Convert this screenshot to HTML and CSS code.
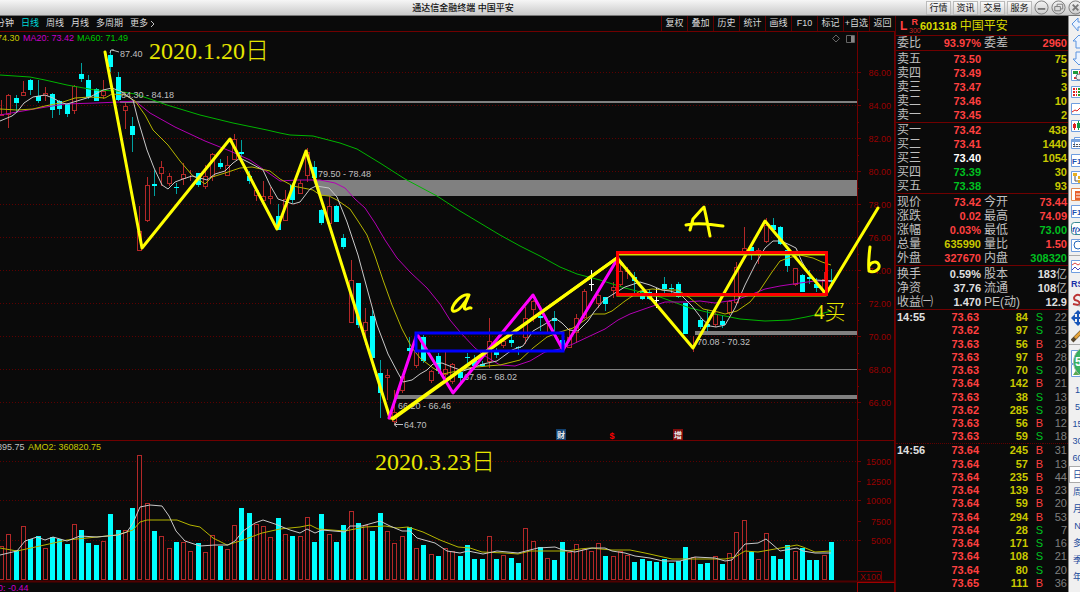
FILE: index.html
```html
<!DOCTYPE html>
<html lang="zh-CN">
<head>
<meta charset="utf-8">
<title>通达信金融终端 中国平安</title>
<link rel="stylesheet" href="styles.css">
</head>
<body>
<header class="titlebar">
  <h1 class="title">通达信金融终端 中国平安</h1>
  <div class="title-actions">
    <button class="tbtn">行情</button><button class="tbtn">资讯</button><button class="tbtn">交易</button><button class="tbtn">服务</button>
    <button class="round" aria-label="最小化"><svg viewBox="0 0 16 16"><circle cx="8" cy="8" r="7"/><path d="M4 9.500h8" stroke-width="2"/></svg></button>
    <button class="round" aria-label="还原"><svg viewBox="0 0 16 16"><circle cx="8" cy="8" r="7"/><path d="M6.500 6.500v-2h6v5h-2M4 7h6v4.500H4z"/></svg></button>
    <button class="round" aria-label="关闭"><svg viewBox="0 0 16 16"><circle cx="8" cy="8" r="7"/><path d="M5 5l6 6M11 5l-6 6" stroke-width="2"/></svg></button>
  </div>
</header>
<div class="workspace">
  <main class="chart-col">
    <nav class="toolbar">
      <div class="periods">
        <button>分钟</button><button class="on">日线</button><button>周线</button><button>月线</button><button>多周期</button><button>更多<svg class="chev" viewBox="0 0 5 8"><path d="M1 1l3 3-3 3"/></svg></button>
      </div>
      <div class="tools">
        <button>复权</button><button>叠加</button><button>历史</button><button>统计</button><button>画线</button><button>F10</button><button>标记</button><button>+自选</button><button>返回</button>
      </div>
    </nav>
    <svg class="chart" viewBox="0 31 895 561" role="img" aria-label="日线图">
      <g id="grid"></g>
      <g class="frame">
        <path d="M857.500 31V592M894.500 31V592M0 440.500H894"/>
        <path d="M0 581.500H894" class="heavy"/>
        <path d="M857.500 571.500H881.500V581"/>
        <path d="M857.500 582.500H894.500M857.500 582V592" class="bright"/>
      </g>
      <g class="bands">
        <path d="M120 101H857V103H120z"/><path d="M313 180H857V196H319z"/><path d="M397 395H857V399H395z"/><path d="M460 369H857V370H460z"/><path d="M695 331H857V335H695z"/>
      </g>
      <g id="candles"></g>
      <g class="ma">
        <polyline class="green" points="0,75 30,77 45,80 67,85 95,90 117,91 135,94 150,99 167,105 200,115 233,123 267,130 280,133 290,135 313,136 340,143 357,149 380,163 405,179 437,196 460,211 500,235 520,246 540,256 560,267 577,274 600,280 625,288 660,297 690,308 715,314 740,319 765,321 790,320 806,317 824,313 831,311"/>
        <polyline class="magenta" points="0,115 17,112 40,108 65,104 95,103 120,102 135,101 150,113 175,127 205,141 230,151 250,160 270,174 280,181 297,180 320,180 335,183 345,188 355,199 365,208 375,223 385,240 397,258 410,272 427,288 440,304 450,320 460,332 475,348 485,356 500,365 515,366 530,361 545,352 560,349 573,344 590,336 605,329 618,320 630,314 650,307 665,302 685,302 700,301 715,303 735,300 750,295 765,289 780,286 800,283 815,281 831,281"/>
        <polyline class="yellow" points="0,109 17,110 33,109 45,106 60,103 75,98 90,97 105,98 112,94 125,95 135,101 145,115 153,130 168,145 180,161 192,175 205,184 212,177 225,173 240,168 252,167 270,171 280,179 293,186 313,190 320,195 329,196 337,200 350,209 358,221 367,235 375,256 383,280 392,305 402,329 412,348 420,358 433,368 443,374 457,371 467,368 487,366 500,365 520,360 533,348 547,337 560,332 573,328 585,320 593,314 605,314 612,311 625,301 640,291 652,289 665,290 678,290 690,298 703,309 718,312 725,314 737,311 750,302 760,290 772,272 780,261 788,258 800,255 813,258 822,262 831,265"/>
        <polyline class="white" points="0,121 12,116 17,112 24,103 33,97 45,95 53,98 62,103 67,104 77,101 90,97 103,90 112,88 122,92 133,100 138,120 147,150 154,168 162,185 168,189 175,182 183,179 192,176 200,178 207,180 215,174 225,171 233,163 240,158 248,162 263,170 270,185 278,199 293,204 300,202 310,189 316,186 329,188 337,197 347,222 358,255 368,292 377,325 388,354 398,373 403,382 412,380 420,374 427,370 433,364 442,363 452,367 463,371 472,368 483,364 497,361 512,350 523,346 533,331 545,324 555,318 562,323 569,330 578,331 588,321 594,312 604,300 615,293 625,287 640,282 650,285 662,290 670,291 680,294 692,306 702,319 710,326 716,327 725,325 735,308 745,285 755,265 765,248 773,241 781,241 790,245 796,248 802,262 810,275 816,280 831,281"/>
        <polyline class="yellow" points="0,548 17,551 40,546 67,540 97,537 117,535 133,530 140,522 147,520 177,520 190,525 200,527 213,538 227,545 240,541 262,533 280,529 300,527 310,525 318,529 345,531 365,527 385,526 397,528 408,527 423,532 440,540 458,547 470,548 482,552 505,553 518,554 530,551 567,551 580,549 590,548 612,550 630,550 645,553 672,559 725,559 735,557 745,551 758,552 775,549 797,545 803,547 815,552 831,551"/>
        <polyline class="white" points="0,555 17,551 25,541 37,537 45,540 53,537 67,541 80,536 97,537 118,535 127,532 133,523 140,507 150,505 162,506 169,516 176,531 185,541 200,546 215,545 228,545 235,541 243,531 255,523 263,520 275,524 290,530 300,533 307,529 315,533 322,530 345,532 350,526 362,526 380,521 390,526 402,531 410,531 417,538 435,543 447,551 460,553 468,551 483,554 497,551 518,553 530,550 538,548 555,547 563,550 575,552 592,548 605,548 612,551 625,553 635,556 650,558 663,561 680,561 695,557 715,558 725,561 732,560 738,552 745,544 758,543 766,539 772,544 780,551 797,548 803,551 815,553 831,553"/>
      </g>
      <g class="small">
        <text x="-3" y="41" class="t-yellow">74.30</text><text x="23" y="41" class="t-magenta">MA20: 73.42</text><text x="77" y="41" class="t-green">MA60: 71.49</text>
        <text x="-3" y="450">895.75</text><text x="28" y="450" class="t-yellow">AMO2: 360820.75</text>
        <text x="-2" y="591" class="t-magenta">0: -0.44</text>
        <text x="120" y="57">87.40</text><text x="121" y="98">84.30 - 84.18</text><text x="318" y="177">79.50 - 78.48</text><text x="464" y="380">67.96 - 68.02</text><text x="398" y="409">66.20 - 66.46</text><text x="404" y="428">64.70</text><text x="697" y="345">70.08 - 70.32</text>
        <path class="pointer" d="M119 52l-7-2M110 53l1-3h3M403 424.500h-8M397 422l-3 2.500 3 2.500"/>
        <path class="corner" d="M836 35l3.500 3.500-3.500 3.500-3.500-3.500zM846.500 35.500h8v7h-8z"/><path class="corner-fill" d="M851 36h3v6h-3z"/>
      </g>
      <g class="axis" id="axis"></g>
      <g class="draw">
        <polyline class="wave" points="105,52 142,248 230,139 277,229 306,151 390,418 393,418 617,258 693,348 765,221 826,294 878,208"/>
        <polyline class="leg" points="389,418 417,334 453,393 533,295 563,350 618,258"/>
        <polyline class="wave" points="393,419 617,258 622,264"/>
        <rect class="blue" x="416" y="333" width="147" height="18"/>
        <path class="thin" d="M618 254.500H826M617 295.500H826"/>
        <rect class="red" x="617.500" y="252.500" width="209" height="42"/>
        <path class="hand" d="M469 295C461 293 449 308 453 311C458 313 466 302 469 295C466 302 463 309 465 309C467 310 469 307 471 308M690 230L693 219L702 209L704 207L706 216L710 236M686 225C700 222 713 225 723 226M870 247C869 255 868 263 869 271C874 273 880 270 879 265C877 260 871 262 869 266"/>
        <text x="149" y="59" class="date">2020.1.20日</text>
        <text x="375" y="470" class="date">2020.3.23日</text>
        <text x="814" y="319" class="buy">4买</text>
      </g>
      <g class="marks">
        <rect x="556" y="429" width="10" height="11" fill="#12406e"/><text x="561" y="438">财</text>
        <text x="612" y="439" class="dollar">$</text>
        <rect x="673" y="429" width="10" height="11" fill="#800c0c"/><text x="678" y="438">增</text>
      </g>
    </svg>
  </main>

  <aside class="quote">
    <div class="stock"><b class="l">L</b><span class="r300"><b>R</b><span>300</span></span><b>601318</b><span class="name">中国平安</span></div>
    <table class="pairs one"><tr><th>委比</th><td class="up">93.97%</td><th>委差</th><td class="up">2960</td></tr></table>
    <table class="book sell">
      <tr><th>卖五</th><td class="up">73.50</td><td>75</td></tr>
      <tr><th>卖四</th><td class="up">73.49</td><td>5</td></tr>
      <tr><th>卖三</th><td class="up">73.47</td><td>3</td></tr>
      <tr><th>卖二</th><td class="up">73.46</td><td>10</td></tr>
      <tr><th>卖一</th><td class="up">73.45</td><td>2</td></tr>
    </table>
    <table class="book">
      <tr><th>买一</th><td class="up">73.42</td><td>438</td></tr>
      <tr><th>买二</th><td class="up">73.41</td><td>1440</td></tr>
      <tr><th>买三</th><td class="flat">73.40</td><td>1054</td></tr>
      <tr><th>买四</th><td class="down">73.39</td><td>30</td></tr>
      <tr><th>买五</th><td class="down">73.38</td><td>93</td></tr>
    </table>
    <table class="pairs">
      <tr><th>现价</th><td class="up">73.42</td><th>今开</th><td class="up">73.44</td></tr>
      <tr><th>涨跌</th><td class="up">0.02</td><th>最高</th><td class="up">74.09</td></tr>
      <tr><th>涨幅</th><td class="up">0.03%</td><th>最低</th><td class="down">73.00</td></tr>
      <tr><th>总量</th><td class="vol">635990</td><th>量比</th><td class="up">1.50</td></tr>
      <tr><th>外盘</th><td class="up">327670</td><th>内盘</th><td class="down">308320</td></tr>
    </table>
    <table class="pairs">
      <tr><th>换手</th><td>0.59%</td><th>股本</th><td>183<span class="unit">亿</span></td></tr>
      <tr><th>净资</th><td>37.76</td><th>流通</th><td>108<span class="unit">亿</span></td></tr>
      <tr><th>收益㈠</th><td>1.470</td><th>PE(动)</th><td>12.9</td></tr>
    </table>
    <table class="ticks">
      <tr><th>14:55</th><td>73.63</td><td>84</td><td class="down">S</td><td>22</td></tr>
      <tr><th></th><td>73.62</td><td>97</td><td class="down">S</td><td>25</td></tr>
      <tr><th></th><td>73.63</td><td>56</td><td class="up">B</td><td>23</td></tr>
      <tr><th></th><td>73.63</td><td>97</td><td class="up">B</td><td>28</td></tr>
      <tr><th></th><td>73.63</td><td>70</td><td class="down">S</td><td>20</td></tr>
      <tr><th></th><td>73.64</td><td>142</td><td class="up">B</td><td>21</td></tr>
      <tr><th></th><td>73.63</td><td>38</td><td class="down">S</td><td>13</td></tr>
      <tr><th></th><td>73.62</td><td>285</td><td class="down">S</td><td>28</td></tr>
      <tr><th></th><td>73.63</td><td>56</td><td class="up">B</td><td>12</td></tr>
      <tr><th></th><td>73.63</td><td>59</td><td class="down">S</td><td>18</td></tr>
      <tr class="minute"><th>14:56</th><td>73.64</td><td>245</td><td class="up">B</td><td>31</td></tr>
      <tr><th></th><td>73.64</td><td>57</td><td class="up">B</td><td>13</td></tr>
      <tr><th></th><td>73.64</td><td>235</td><td class="up">B</td><td>44</td></tr>
      <tr><th></th><td>73.64</td><td>139</td><td class="up">B</td><td>23</td></tr>
      <tr><th></th><td>73.64</td><td>59</td><td class="up">B</td><td>20</td></tr>
      <tr><th></th><td>73.64</td><td>294</td><td class="up">B</td><td>53</td></tr>
      <tr><th></th><td>73.64</td><td>28</td><td class="down">S</td><td>7</td></tr>
      <tr><th></th><td>73.64</td><td>171</td><td class="down">S</td><td>16</td></tr>
      <tr><th></th><td>73.64</td><td>108</td><td class="down">S</td><td>21</td></tr>
      <tr><th></th><td>73.64</td><td>80</td><td class="down">S</td><td>20</td></tr>
      <tr><th></th><td>73.65</td><td>111</td><td class="up">B</td><td>36</td></tr>
    </table>
  </aside>

  <nav class="rail" aria-label="工具">
    <button aria-label="后退"><svg viewBox="0 0 18 17"><path class="arrow" d="M1 8l6-6v4h9v5H7v4z"/></svg></button>
    <button aria-label="上"><svg viewBox="0 0 18 17"><path class="arrow" d="M8 2l6 6h-3v7H5V8H2z"/></svg></button>
    <button aria-label="下"><svg viewBox="0 0 18 17"><path class="arrow" d="M8 15l6-6h-3V2H5v7H2z"/></svg></button>
    <button aria-label="报表"><svg viewBox="0 0 18 17"><path class="box" d="M.500 2.500h16v11H.500z"/><path fill="#1d9a3a" d="M2 4h5v3H2z"/><path fill="#d33" d="M8 4h5v3H8zM3 10h4v2H3z"/><circle cx="8" cy="10" r="3" fill="#eee" stroke="#678"/></svg></button>
    <button aria-label="行情表"><svg viewBox="0 0 18 17"><path class="box" d="M.500 2.500h16v11H.500z"/><path stroke="#d22" stroke-width="2" stroke-dasharray="2 1" d="M2 5h4M2 8h4M2 11h4"/><path stroke="#292" stroke-width="2" stroke-dasharray="2 1" d="M7 5h3M7 8h3M7 11h3"/><path stroke="#22a" stroke-width="2" stroke-dasharray="2 1" d="M11 5h5M11 8h5M11 11h5"/></svg></button>
    <button aria-label="分时"><svg viewBox="0 0 18 17"><path class="box" d="M.500 2.500h16v11H.500z"/><path fill="none" stroke="#d22" d="M1 11l3-2 2 1 4-4 2 1 3-4"/></svg></button>
    <button aria-label="K线"><svg viewBox="0 0 18 17"><path class="box" d="M.500 2.500h16v11H.500z"/><path fill="#d22" d="M2 6h3v4H2zM3 5h1v7H3zM9 7h3v3H9z"/><path fill="#194" d="M6 5h3v5H6zM7 3h1v9H7z"/></svg></button>
    <button aria-label="多窗"><svg viewBox="0 0 18 17"><path class="box" d="M3.500 2.500h14v9h-14zM.500 4.500h14v9H.500z"/><path fill="#7ba4dc" d="M1 5h13v2H1z"/><path stroke="#555" stroke-dasharray="2 1" d="M2 9.500h9M2 11.500h9"/></svg></button>
    <button aria-label="基本面"><svg viewBox="0 0 18 17"><path class="box" d="M.500 2.500h17v12H.500z"/><text x="1" y="12">F10</text></svg></button>
    <button aria-label="树"><svg viewBox="0 0 18 17"><path class="box" d="M.500 2.500h16v12H.500z"/><path fill="#e8b020" d="M2 4h4v3H2zM7 7h5v3H7zM7 11h5v3H7z"/><path fill="none" stroke="#555" d="M4 7v5h3"/></svg></button>
    <button aria-label="公告"><svg viewBox="0 0 18 17"><path fill="#fff" stroke="#e08a50" d="M.500 2.500h16v12H.500z"/><path fill="#e8602c" d="M4 5h7v9H4z"/><path stroke="#fff" d="M5 8h5M5 11h5"/></svg></button>
    <button aria-label="F12"><svg viewBox="0 0 18 17"><path class="box" d="M.500 2.500h17v12H.500z"/><text x="1" y="12">F12</text></svg></button>
    <button aria-label="公式"><svg viewBox="0 0 18 17"><rect x=".5" y="2.500" width="16" height="12" rx="3" fill="#fff" stroke="#398a94"/><text x="1" y="12" font-style="italic">f(x)</text></svg></button>
    <button aria-label="搜索"><svg viewBox="0 0 18 17"><path class="box" d="M.500 2.500h16v12H.500z"/><circle cx="7" cy="8" r="4" fill="none" stroke="#26b" stroke-width="1"/></svg></button>
    <hr>
    <button aria-label="叠加线"><svg viewBox="0 0 18 17"><path class="box" d="M.500 2.500h16v12H.500z"/><path fill="none" stroke="#d44" d="M1 7l3-2 3 2 3-2 3 2"/><path fill="none" stroke="#44b" d="M1 12l3-3 3 3 3-3 3 3"/></svg></button>
    <button aria-label="RS"><svg viewBox="0 0 18 17"><text x="0" y="12" class="rs">RSI</text></svg></button>
    <button aria-label="资金"><svg viewBox="0 0 18 17"><path fill="none" stroke="#b33" stroke-width="2" d="M10 4C6 1 1 5 4 8C9 9 10 12 7 13L2 12"/><path fill="#999" d="M6 14l5-3v4z"/></svg></button>
    <button aria-label="移动"><svg viewBox="0 0 18 17"><path fill="#1855b8" d="M7 1l4 4H8v3h3V5l4 4-4 4v-3H8v3h3l-4 4-4-4h3v-3H4v3L0 9l4-4v3h2V5H3z"/></svg></button>
    <button aria-label="画笔"><svg viewBox="0 0 18 17"><path stroke="#54452d" stroke-width="4" d="M1 15L12 4"/><path stroke="#e5a33a" stroke-width="3" d="M4 12L12 4"/></svg></button>
    <hr>
    <button aria-label="窗口"><svg viewBox="0 0 18 17"><path class="box" d="M.500 3.500h16v13H.500z"/></svg></button>
    <button aria-label="图片"><svg viewBox="0 0 18 17"><path class="box" d="M.500 .500h16v12H.500z"/><path fill="#5bab50" d="M2 11l4-6 6 6z"/></svg></button>
    <button class="p">1</button><button class="p">5</button><button class="p">15</button><button class="p">30</button><button class="p">60</button><button class="p day">日</button><button class="p">周</button><button class="p">月</button><button class="p">N</button><button class="p">多</button><button class="p">季</button><button class="p">年</button>
    <span class="ball">53</span>
  </nav>
</div>
<script src="chart.js"></script>
</body>
</html>
```

FILE: styles.css
```css
* { box-sizing: border-box; }
html { overflow: hidden; }
body {
  margin: 0;
  height: 100vh;
  display: flex;
  flex-direction: column;
  background: #0a0a0a;
  color: #c0c0c0;
  font: 9px/12px "Liberation Sans", "Noto Sans CJK SC", sans-serif;
}
button { font: inherit; color: inherit; background: none; border: 0; padding: 0; margin: 0; white-space: nowrap; }

.titlebar {
  flex: none;
  display: grid;
  grid-template-columns: 1fr auto;
  align-items: center;
  height: 16px;
  background: linear-gradient(#f6f6f6, #c9c9c9);
  border-bottom: 1px solid #777;
  color: #111;
  overflow: hidden;
}
.title { margin: 0; font-size: 9px; line-height: 14px; font-weight: 500; text-align: center; }
.title-actions { display: flex; align-items: center; gap: 2px; margin-right: -3px; }
.tbtn { width: 25px; height: 14px; line-height: 12px; border: 1px solid #bbb; background: linear-gradient(#fafafa, #d4d4d4); }
.round { width: 15px; height: 15px; }
.round svg { display: block; width: 15px; height: 15px; fill: none; stroke: #777; }

.workspace { flex: 1; min-height: 0; display: grid; grid-template-columns: 1fr 173px 12px; }
.chart-col { min-width: 0; }
.toolbar { display: flex; justify-content: space-between; height: 15px; line-height: 15px; overflow: hidden; color: #d8d8d8; }
.periods { display: flex; gap: 7px; margin-left: -4px; }
.periods .on { color: #00d8d8; }
.chev { width: 5px; height: 8px; margin-left: 2px; fill: none; stroke: #c0c0c0; vertical-align: middle; }
.tools { display: flex; }
.tools button { width: 26px; border-left: 1px solid #600000; }

.chart { display: block; width: 100%; height: auto; border-top: 0; }
.grid-line { stroke: #5c0000; stroke-dasharray: 1 2; }
.frame path { fill: none; stroke: #700000; }
.frame .heavy { stroke: #500000; stroke-width: 2; }
.frame .bright { stroke: #a00000; }
.bands path { fill: #808080; }
.up-bar { fill: #0a0a0a; stroke: #b32828; }
.up-wick { stroke: #b32828; }
.down-bar { fill: #00ffff; }
.down-wick { stroke: #00a0a0; }
.doji { stroke: #ffffff; }
.ma polyline { fill: none; stroke-width: 1; }
.ma .green { stroke: #00b400; }
.ma .magenta { stroke: #b400b4; }
.ma .yellow { stroke: #b4b400; }
.ma .white { stroke: #c8c8c8; }
.small text { font-size: 9px; fill: #c0c0c0; }
.small .t-yellow { fill: #c8c800; }
.small .t-magenta { fill: #c800c8; }
.small .t-green { fill: #00c800; }
.pointer { fill: none; stroke: #c0c0c0; }
.corner { fill: none; stroke: #666; }
.corner-fill { fill: #888; }
.axis text { font-size: 9px; fill: #980000; text-anchor: end; }
.axis path { stroke: #700000; }
.draw polyline, .draw path, .draw rect { fill: none; stroke-linecap: round; stroke-linejoin: round; }
.draw .wave { stroke: #ffff00; stroke-width: 3; }
.draw .leg { stroke: #ff00ff; stroke-width: 3; }
.draw .blue { stroke: #0000ff; stroke-width: 3; stroke-linejoin: miter; }
.draw .red { stroke: #ff0000; stroke-width: 3; stroke-linejoin: miter; }
.draw .thin { stroke: #d8d800; stroke-width: 2; }
.draw .hand { stroke: #ffff00; stroke-width: 3; }
.date, .buy { font-family: "Liberation Serif", "Noto Sans CJK SC", serif; font-weight: 300; fill: #e6e600; }
.date { font-size: 24px; }
.buy { font-size: 21px; }
.marks text { font-size: 8px; font-weight: 700; fill: #e8e8e8; text-anchor: middle; }
.marks .dollar { fill: #ff0000; font-size: 9px; }

.quote { display: flex; flex-direction: column; border-left: 1px solid #600000; font-size: 11px; line-height: 14px; padding-bottom: 2px; overflow: hidden; }
.stock { flex: none; display: flex; align-items: center; height: 20px; color: #d8d800; border-bottom: 1px solid #700000; }
.stock .l { color: #ff4040; width: 9px; margin-left: 4px; font-size: 12px; }
.r300 { display: grid; width: 11px; color: #ff4040; font-size: 9px; line-height: 9px; justify-items: center; }
.r300 span { font-size: 7px; line-height: 7px; color: #c82020; }
.stock .name { font-size: 12px; margin-left: 3px; }
table { width: 100%; border-collapse: collapse; table-layout: fixed; }
th, td { padding: 0; white-space: nowrap; }
th { font-weight: 400; font-size: 12px; text-align: left; padding-left: 1px; }
td { font-weight: 700; text-align: right; color: #e0e0e0; }
.pairs, .book { border-bottom: 1px solid #700000; margin-bottom: 1px; }
.book.sell { margin-bottom: 0; }
.pairs th:first-child, .book th { width: 32px; }
.pairs td:nth-child(2), .book td:nth-child(2) { width: 53px; }
.pairs th:nth-child(3) { width: 40px; padding-left: 3px; }
.pairs td:last-child, .book td:last-child { padding-right: 1px; }
.unit { font-weight: 400; color: #c0c0c0; }
.book td:last-child, td.vol { color: #c8c800; }
td.up { color: #ff4040; }
td.down { color: #00c020; }
.book td.flat { color: #fff; }
.ticks { flex: 1; line-height: 13px; }
.ticks th { width: 32px; font-weight: 700; font-size: 11px; color: #e0e0e0; }
.ticks td:nth-child(2) { width: 51px; color: #ff4040; }
.ticks td:nth-child(3) { width: 49px; color: #c8c800; }
.ticks td:nth-child(4) { width: 15px; font-weight: 400; }
.ticks td:nth-child(5) { color: #808080; font-weight: 400; padding-right: 1px; }
.minute { border-top: 1px dotted #600000; }

.rail { position: relative; display: flex; flex-direction: column; overflow: hidden; background: #f0f0f0; border-left: 1px solid #888; color: #1c4c9c; }
.rail button { flex: none; height: 17px; padding-left: 2px; overflow: hidden; text-align: left; }
.rail svg { display: block; width: 18px; height: 17px; }
.rail svg text { font-size: 8px; font-weight: 700; fill: #2250b0; }
.rail svg .rs { font-size: 9px; fill: #1a30a8; }
.rail hr { flex: none; width: 100%; height: 1px; margin: 1px 0 2px; border: 0; background: #aaa; }
.rail .arrow { fill: #eaf3ff; stroke: #5a94e0; }
.rail .box { fill: #fff; stroke: #6f9ee0; }
.rail .p { width: 17px; padding: 0; text-align: center; font-size: 9px; }
.rail .day { border: 1px solid #aaa; background: #fff; }
.ball { position: absolute; left: 4px; top: 329px; width: 34px; height: 34px; border-radius: 50%; background: radial-gradient(#52c878, #28a050); border: 1px solid #a8b8a8; color: #fff; font: 700 12px/32px "Liberation Sans", sans-serif; padding-left: 1px; }
```

FILE: chart.js
```js
const NS = "http://www.w3.org/2000/svg";
function add(parent, tag, attrs, text) {
  const el = document.createElementNS(NS, tag);
  for (const k in attrs) el.setAttribute(k, attrs[k]);
  if (text) el.textContent = text;
  parent.appendChild(el);
}

// kind, high, body top, body bottom, low, volume top
// r = up day, c = down day, a / b = doji on up / down volume
const days = `r 100 114 116 116 546|r 94 95 115 128 534|c 95 98 103 112 550|r 81 92 96 96 526|c 79 80 90 95 539|c 80 96 101 103 536|r 87 93 96 101 548|c 93 94 110 118 537|c 100 101 109 115 539|c 103 104 114 117 544
r 85 86 111 114 524|c 63 74 79 82 530|c 75 80 97 99 543|c 88 89 101 101 545|r 80 91 96 99 541|c 50 55 67 72 514|c 72 77 100 101 530|r 103 106 111 129 530|c 117 126 135 152 508|r 206 231 251 251 455
r 177 185 221 222 503|c 170 184 186 196 531|r 161 167 174 186 536|r 173 176 184 186 548|c 183 187 188 194 542|r 163 174 179 185 542|r 170 174 175 181 551|c 173 173 185 187 543|r 165 176 187 189 552|r 153 154 177 181 535
c 159 163 167 169 546|r 156 165 176 176 549|r 134 139 160 160 525|c 140 152 154 157 508|c 171 176 181 184 513|r 190 190 196 201 524|r 181 196 201 201 526|r 187 196 199 204 537|c 204 216 230 230 518|r 190 199 221 221 534
c 183 185 200 203 536|r 180 183 194 194 536|r 148 152 176 182 517|c 161 167 178 180 542|c 209 210 223 225 514|r 197 206 224 224 534|c 205 206 222 222 542|c 234 238 247 249 525|r 260 280 323 323 511|c 283 283 325 328 523
r 308 322 331 345 525|c 310 316 358 360 531|c 360 373 393 418 513|r 369 375 378 400 531|r 390 412 422 425 543|r 375 376 391 393 536|c 337 348 351 354 527|r 336 350 366 368 548|c 335 337 361 363 545|r 370 371 381 383 554
c 353 356 371 374 556|r 352 369 375 380 548|r 363 364 382 384 551|c 370 372 378 383 556|c 353 357 358 363 545|c 355 360 366 367 559|c 361 364 366 367 559|r 318 341 362 368 536|c 348 352 355 358 559|r 340 341 346 348 555
c 335 340 343 347 558|c 346 347 348 355 563|r 307 318 338 344 528|r 300 301 310 322 541|c 310 316 318 331 547|r 323 331 331 333 558|c 311 318 321 331 560|c 339 340 346 349 542|r 328 337 348 348 552|r 314 318 333 343 544
r 289 291 318 319 549|a 270 284 284 291 551|r 294 295 304 308 543|c 297 297 304 311 556|r 282 287 291 298 556|r 260 271 285 286 551|r 267 270 272 279 555|c 272 277 281 295 562|c 290 291 299 300 559|c 290 292 299 300 561
b 288 300 300 308 562|c 277 284 289 293 559|c 284 288 289 296 563|c 282 284 297 298 561|c 303 303 334 334 547|r 336 336 336 352 557|c 318 320 327 329 564|c 310 324 327 331 563|r 308 314 325 327 556|c 315 321 325 328 564
r 300 301 313 315 553|r 262 267 303 304 532|r 227 248 252 254 520|c 245 247 253 260 552|r 248 250 252 264 559|r 218 225 242 243 533|c 218 225 230 230 556|c 226 227 244 245 559|c 247 250 266 272 545|r 268 268 285 286 551
c 274 275 292 292 548|c 270 277 279 284 560|c 278 284 288 292 560|r 272 279 294 296 555|c 269 280 282 287 542`;

const candles = document.getElementById("candles");
days.split(/[|\n]/).forEach((row, i) => {
  const [kind, ...nums] = row.trim().split(" ");
  const [high, top, bottom, low, vol] = nums.map(Number);
  const x = Math.round(1.1 + 7.28 * i);
  const mid = x + 0.5;
  if (kind === "r") {
    add(candles, "path", { class: "up-wick", d: `M${mid} ${high}V${top}M${mid} ${bottom}V${low}` });
    add(candles, "rect", { class: "up-bar", x: x - 1.5, y: top + 0.5, width: 4, height: Math.max(bottom - top - 1, 0) });
  } else if (kind === "c") {
    add(candles, "path", { class: "down-wick", d: `M${mid} ${high}V${low}` });
    add(candles, "rect", { class: "down-bar", x: x - 2, y: top, width: 5, height: Math.max(bottom - top, 1) });
  } else {
    add(candles, "path", { class: "doji", d: `M${mid} ${high}V${low}M${x - 2} ${top + 0.5}H${x + 3}` });
  }
  if (kind === "r" || kind === "a") {
    add(candles, "rect", { class: "up-bar", x: x - 1.5, y: vol + 0.5, width: 4, height: 579 - vol });
  } else {
    add(candles, "rect", { class: "down-bar", x: x - 2, y: vol, width: 5, height: 580 - vol });
  }
});

const grid = document.getElementById("grid");
const axis = document.getElementById("axis");
add(grid, "path", { class: "grid-top", d: "M0 31.5H894", stroke: "#700000" });
for (let k = 0; k <= 10; k++) {
  const y = 72 + 33 * k;
  add(grid, "path", { class: "grid-line", d: `M0 ${y + 0.5}H857` });
  add(axis, "path", { d: `M857 ${y + 0.5}h4M857 ${y + 17.5}h2` });
  add(axis, "text", { x: 891, y: y + 4 }, (86 - 2 * k).toFixed(2));
}
[[15000, 461], [12500, 481], [10000, 500], [7500, 521], [5000, 540]].forEach(([v, y], i) => {
  if (i % 2 === 0) add(grid, "path", { class: "grid-line", d: `M0 ${y + 0.5}H857` });
  add(axis, "path", { d: `M857 ${y + 0.5}h4` });
  add(axis, "text", { x: 891, y: y + 4 }, String(v));
});
add(axis, "text", { x: 881, y: 580 }, "X100");
```
